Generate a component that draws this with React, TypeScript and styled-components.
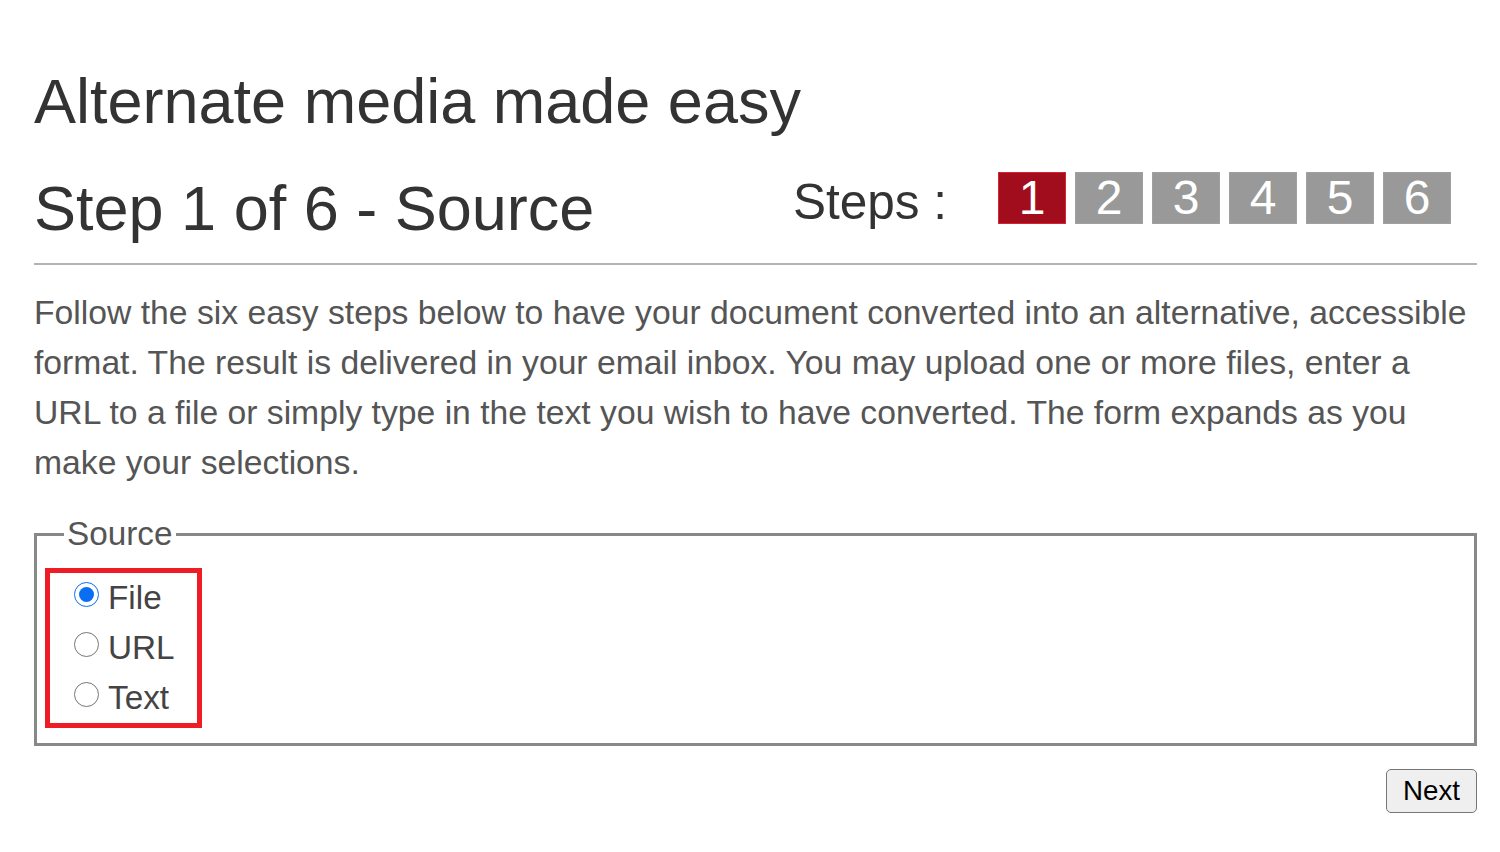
import React, { useState } from "react";
import styled, { createGlobalStyle } from "styled-components";

const Global = createGlobalStyle`
  html, body { margin: 0; padding: 0; background: #fff; }
  body { font-family: "Liberation Sans", Arial, sans-serif; }
`;

const Page = styled.main`
  width: 1443px;
  padding: 64px 0 0 34px;
  box-sizing: content-box;
`;

const Title = styled.h1`
  margin: 0;
  font-size: 63px;
  line-height: 75px;
  font-weight: 400;
  color: #333;
`;

const StepRow = styled.div`
  display: flex;
  align-items: flex-start;
  justify-content: space-between;
  margin-top: 32px;
  padding-right: 26px;
`;

const StepTitle = styled.h2`
  margin: 0;
  font-size: 63px;
  line-height: 75px;
  font-weight: 400;
  color: #333;
`;

const Steps = styled.div`
  display: flex;
  align-items: center;
  margin-top: -3px;
`;

const StepsLabel = styled.span`
  font-size: 49.5px;
  line-height: 52px;
  color: #333;
  margin-right: 42px;
  margin-top: 8px;
`;

const StepBox = styled.span<{ $active?: boolean }>`
  display: flex;
  align-items: center;
  justify-content: center;
  box-sizing: border-box;
  width: 68px;
  height: 52px;
  margin-left: 9px;
  font-size: 48px;
  line-height: 1;
  color: #fff;
  background: ${(p) => (p.$active ? "#a10d1c" : "#999")};
  border: 1px solid ${(p) => (p.$active ? "#d82330" : "#a0a0a0")};
  &:first-of-type { margin-left: 0; }
`;

const Divider = styled.hr`
  margin: 17px 0 0;
  border: 0;
  border-top: 2px solid #b3b3b3;
`;

const Intro = styled.p`
  margin: 22px 0 0;
  font-size: 33.7px;
  line-height: 50px;
  color: #555;
`;

const SourceSet = styled.fieldset`
  margin: 29px 0 0;
  padding: 0 8px 15px;
  border: 3px solid #888;
`;

const Legend = styled.legend`
  margin-left: 19px;
  padding: 0 3px;
  font-size: 33.3px;
  line-height: 36px;
  color: #555;
`;

const Highlight = styled.div`
  width: 157px;
  box-sizing: border-box;
  border: 5px solid #ee1c25;
  margin-top: 16px;
`;

const Option = styled.label`
  display: flex;
  align-items: center;
  height: 50px;
  padding-left: 24px;
  font-size: 33.3px;
  color: #444;
`;

const Radio = styled.input`
  width: 25px;
  height: 25px;
  margin: 0 9px 8px 0;
  accent-color: #0a6ef5;
`;

const Footer = styled.div`
  display: flex;
  justify-content: flex-end;
  margin-top: 23px;
`;

const NextButton = styled.button`
  width: 91px;
  height: 44px;
  font-family: "Liberation Sans", Arial, sans-serif;
  font-size: 27.7px;
  color: #000;
  background: #efefef;
  border: 1.5px solid #767676;
  border-radius: 5px;
  padding: 0;
`;

export default function App() {
  const [source, setSource] = useState("file");
  const options = [
    { value: "file", label: "File" },
    { value: "url", label: "URL" },
    { value: "text", label: "Text" },
  ];
  return (
    <Page>
      <Global />
      <Title>Alternate media made easy</Title>
      <StepRow>
        <StepTitle>Step 1 of 6 - Source</StepTitle>
        <Steps>
          <StepsLabel>Steps :</StepsLabel>
          {[1, 2, 3, 4, 5, 6].map((n) => (
            <StepBox key={n} $active={n === 1}>
              {n}
            </StepBox>
          ))}
        </Steps>
      </StepRow>
      <Divider />
      <Intro>
        Follow the six easy steps below to have your document converted into an alternative, accessible
        format. The result is delivered in your email inbox. You may upload one or more files, enter a
        URL to a file or simply type in the text you wish to have converted. The form expands as you
        make your selections.
      </Intro>
      <SourceSet>
        <Legend>Source</Legend>
        <Highlight>
          {options.map((o) => (
            <Option key={o.value}>
              <Radio
                type="radio"
                name="source"
                value={o.value}
                checked={source === o.value}
                onChange={() => setSource(o.value)}
              />
              {o.label}
            </Option>
          ))}
        </Highlight>
      </SourceSet>
      <Footer>
        <NextButton type="button">Next</NextButton>
      </Footer>
    </Page>
  );
}
